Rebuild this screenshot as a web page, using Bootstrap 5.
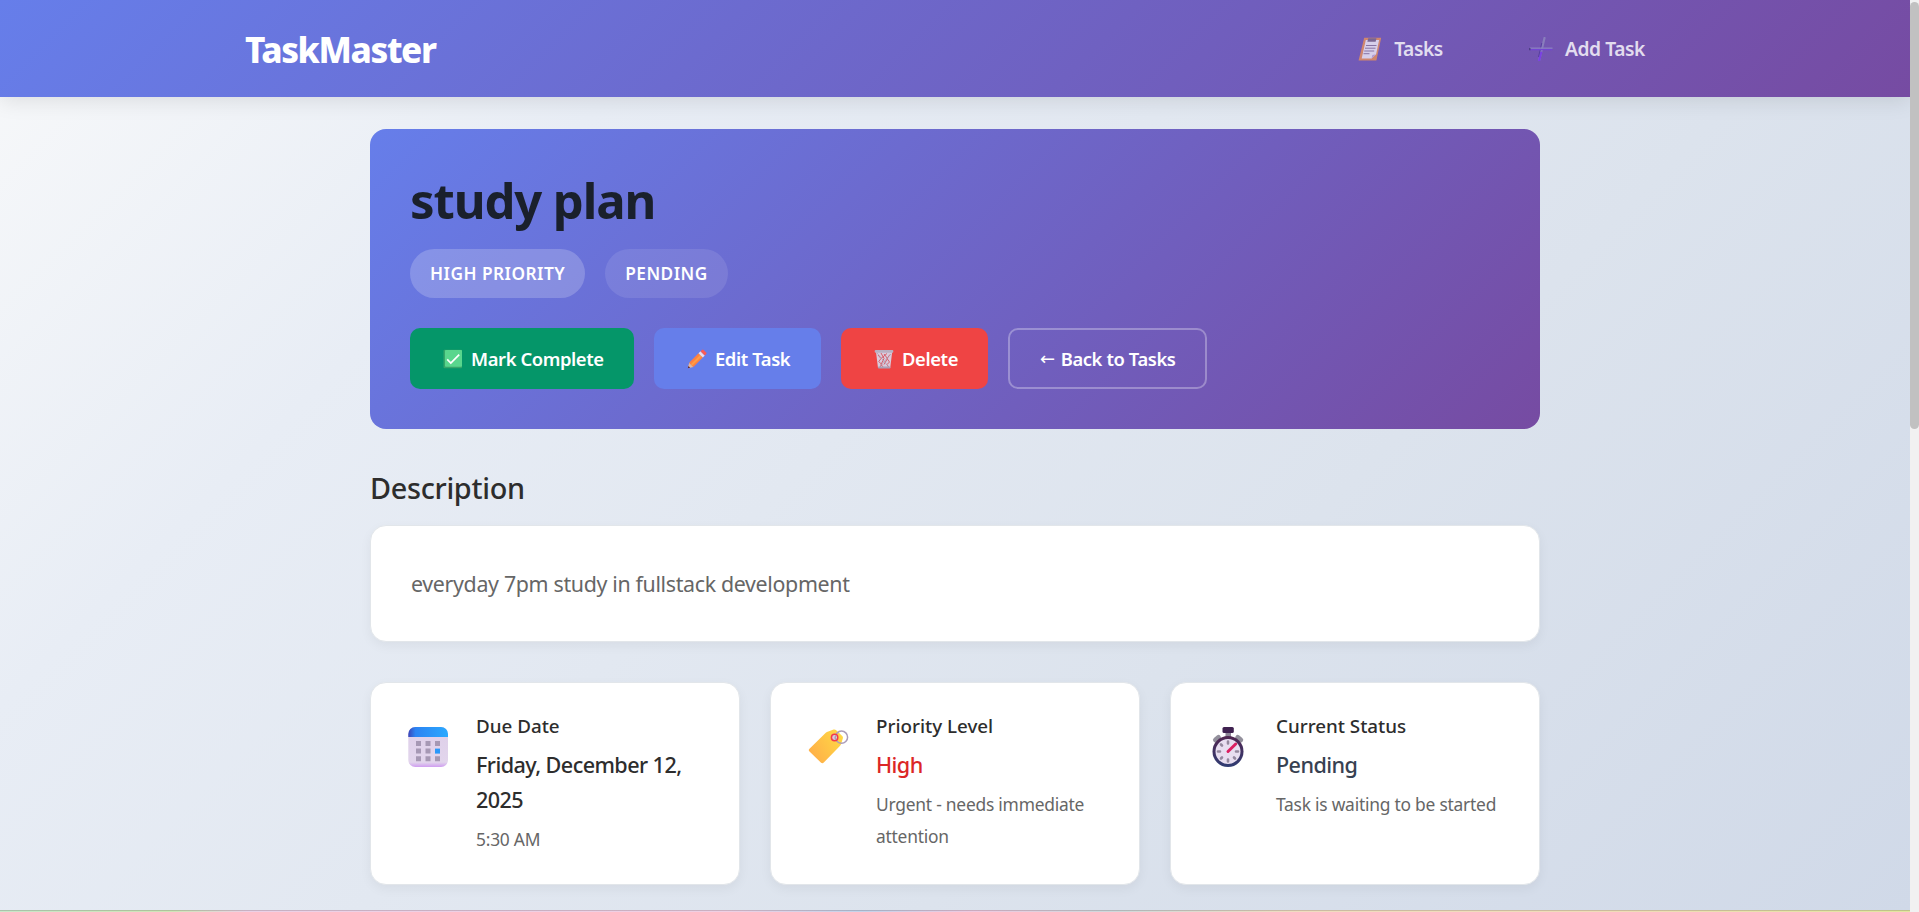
<!DOCTYPE html>
<html lang="en">
<head>
<meta charset="utf-8">
<meta name="viewport" content="width=device-width, initial-scale=1">
<title>TaskMaster</title>
<link href="https://cdn.jsdelivr.net/npm/bootstrap@5.3.0/dist/css/bootstrap.min.css" rel="stylesheet">
<style>
html,body{height:100%;overflow:hidden}
body{font-family:"Noto Sans","Open Sans",sans-serif;background:#f1f1f1;color:#2d2d2d}
.page{width:1910px;height:912px;background:linear-gradient(135deg,#f8f9fa 0%,#e8edf5 25%,#dce3ed 65%,#d0d9e8 100%)}
.topbar{height:97px;flex:none;background:linear-gradient(135deg,#667eea,#764ba2);box-shadow:0 4px 20px rgba(0,0,0,.1)}
.inner{width:1420px;padding-right:20px}
.brand{font-size:35px;font-weight:800;color:#fff;line-height:1;letter-spacing:-1.4px;padding-top:2px}
.menu-link{font-size:19.2px;font-weight:600;color:#fff;opacity:.8;line-height:1;letter-spacing:-.4px;gap:12px;text-decoration:none}
.menu-gap{gap:86px}
.wrap{width:1170px;padding-top:32px;flex:none}
.hero{height:300px;border-radius:16px;background:linear-gradient(135deg,#667eea,#764ba2);padding:40px}
.hero h1{font-size:49px;font-weight:700;color:#1a202c;line-height:62px;height:80px;margin:0;letter-spacing:-1.1px}
.pill{height:49px;padding:0 20px;border-radius:25px;background:rgba(255,255,255,.1);color:#fff;font-weight:600;font-size:17.3px;letter-spacing:.47px}
.pill.hi{background:rgba(255,255,255,.2)}
.gap-20{gap:20px}
.acts{margin-top:30px}
.act{height:61px;border-radius:10px;border:0;color:#fff;font-weight:600;font-size:18.4px;letter-spacing:-.4px;padding:0 0 0 33px;gap:8px}
.act-done{width:224px;background:#059669}
.act-edit{width:167px;background:#667eea}
.act-del{width:147px;background:#ef4444}
.act-back{width:199px;border:2px solid rgba(255,255,255,.3);padding-left:30px;gap:6px}
.arr{font-family:"DejaVu Sans",sans-serif;font-weight:400;font-size:18px}
.h-sec{font-size:28.8px;font-weight:500;line-height:36px;margin:41px 0 19px;letter-spacing:-.3px}
.panel{background:#fff;border:1px solid #e2e6ea;border-radius:16px;box-shadow:0 4px 12px rgba(0,0,0,.05)}
.desc{height:117px;padding:2px 0 0 40px;font-size:21.4px;color:#666;letter-spacing:-.34px}
.infos{display:grid;grid-template-columns:repeat(3,370px);gap:30px;margin-top:40px}
.info{height:203px;padding:28px 22px 0 36px}
.info svg{margin-top:15px;flex:none}
.info-text{margin-left:27px}
.lab{font-size:18.8px;font-weight:500;line-height:30px;letter-spacing:0;margin:0}
.val{font-size:21.6px;font-weight:500;line-height:35px;letter-spacing:-.57px;margin:6px 0}
.sub{font-size:17.4px;color:#666;line-height:32px;letter-spacing:-.23px;margin:0}
.high{color:#dc2626}
.pend{color:#374151}
.strip{height:2px;border-top:1px solid rgba(0,0,0,.15);background:linear-gradient(90deg,#c8e6c9 0,#cfe5b8 9%,#ecd0e6 13%,#efcfe3 38%,#c3d3ea 45%,#efc9e0 51%,#cfd8dc 58%,#f0dcc0 68%,#f0dcb8 85%,#e2e6a0 100%) border-box}
.scroll-track{width:9px;height:912px;padding-top:2px;background:#f1f1f1}
.scroll-thumb{height:427px;border-radius:5px;background:#c1c1c1}
</style>
</head>
<body class="d-flex">
<div class="page d-flex flex-column">
<header class="topbar">
  <div class="inner mx-auto d-flex align-items-center justify-content-between h-100">
    <span class="brand">TaskMaster</span>
    <nav class="d-flex menu-gap">
      <a class="menu-link d-flex align-items-center">
        <svg width="24" height="24" viewBox="0 0 24 24"><path d="M6.2.8h17L18.4 23.5H.6z" fill="#e8925c"/><path d="M7.8 3h13.3l-3 14.2-4.500 4.300H3.700z" fill="#f1edf8"/><path d="M18.200 17.200l-4.700 4.400.9-3.700z" fill="#c2a9d6"/><path d="M10.300 1.200h8.200l-.9 3.600H9.300z" fill="#7d6a8c"/><path d="M8 8.500h10.500M7 11.200h10.500M6.200 14h10M5.500 16.700h6" stroke="#8d7aa0" stroke-width="1"/></svg>
        <span>Tasks</span></a>
      <a class="menu-link d-flex align-items-center">
        <svg width="24" height="24" viewBox="0 0 24 24"><path d="M15.500 1L10.200 23.200" stroke="#8f88c0" stroke-width="2.200" stroke-linecap="round"/><path d="M12.200 15.500L10.200 23.200" stroke="#7c3cf0" stroke-width="2.200" stroke-linecap="round"/><path d="M12.800 6L9.500 20" stroke="#4f3a9c" stroke-width="1"/><path d="M1 11.200h22.500" stroke="#9089c6" stroke-width="1.400"/><path d="M1 12.600h22.300" stroke="#7440dc" stroke-width="1.300"/><path d="M.8 13.200v-2.200" stroke="#3f3570" stroke-width="1.300"/></svg>
        <span>Add Task</span></a>
    </nav>
  </div>
</header>
<main class="wrap mx-auto">
  <section class="hero">
    <h1>study plan</h1>
    <div class="d-flex gap-20">
      <div class="pill hi d-flex align-items-center">HIGH PRIORITY</div>
      <div class="pill d-flex align-items-center">PENDING</div>
    </div>
    <div class="acts d-flex gap-20">
      <button class="act act-done btn d-flex align-items-center">
        <svg width="20" height="20" viewBox="0 0 20 20"><rect x=".5" y=".8" width="18.500" height="18.500" rx="1" fill="#36a56a"/><rect x="2" y="1" width="17" height="16.800" rx=".8" fill="#59d68d"/><path d="M4.200 10.300l3.600 3.700 8.400-8.400" fill="none" stroke="#fff" stroke-width="1.700"/></svg>
        <span>Mark Complete</span></button>
      <button class="act act-edit btn d-flex align-items-center">
        <svg width="20" height="20" viewBox="0 0 20 20"><path d="M.8 19.300l1.400-5.600 4.200 4.200z" fill="#e8b79a"/><path d="M.8 19.300l.6-2.400 1.800 1.800z" fill="#5b2b3a"/><path d="M2.200 13.700L11.500 4.300l4.300 4.300-9.400 9.300z" fill="#ff8040"/><path d="M3.800 15.300l9.300-9.300 1.400 1.400-9.300 9.300z" fill="#ff9d45"/><path d="M11.500 4.300l2-2 4.300 4.300-2 2z" fill="#e4dcf0"/><path d="M13.500 2.300L15 .9q.8-.7 1.600 0l2.600 2.600q.7.8 0 1.600l-1.400 1.500z" fill="#fb5b55"/></svg>
        <span>Edit Task</span></button>
      <button class="act act-del btn d-flex align-items-center">
        <svg width="20" height="20" viewBox="0 0 20 20"><path d="M2 3h16.200l-2 16H4z" fill="#d9cbdc"/><path d="M4 6l3 3.500-2.200 3 3 3L6 18M7 4l3 5.500-3 6 2.500 3M10 5l3.500 4.500-3.500 6M16 5.500l-3 4 2.500 3.500-2.500 2.500 1.500 2.500M13 4.500L7 9.500" fill="none" stroke="#d8606c" stroke-width="1"/><path d="M3 4l11 13M17 5L6 17" stroke="#a99bb0" stroke-width=".7"/><rect x=".7" y="1" width="18.600" height="2.700" rx="1" fill="#b9b0c2"/><rect x="4" y="17.600" width="12.400" height="1.900" rx=".8" fill="#aaa0b5"/></svg>
        <span>Delete</span></button>
      <button class="act act-back btn d-flex align-items-center"><span class="arr">←</span><span>Back to Tasks</span></button>
    </div>
  </section>
  <h2 class="h-sec">Description</h2>
  <div class="panel desc d-flex align-items-center">everyday 7pm study in fullstack development</div>
  <div class="infos">
    <div class="panel info d-flex align-items-start">
      <svg width="42" height="42" viewBox="0 0 42 42"><defs><linearGradient id="ct" x1="0" x2="1"><stop offset="0" stop-color="#3b45b8"/><stop offset=".18" stop-color="#2c83f2"/><stop offset="1" stop-color="#2aa9ff"/></linearGradient><linearGradient id="cb" x1="0" y1="0" x2="0" y2="1"><stop offset="0" stop-color="#decfe9"/><stop offset=".88" stop-color="#e2d5ec"/><stop offset="1" stop-color="#cf9df0"/></linearGradient></defs><rect x="1.300" y="1" width="39.700" height="40" rx="7" fill="url(#cb)"/><path d="M1.300 11V8a7 7 0 0 1 7-7h25.700a7 7 0 0 1 7 7v3z" fill="url(#ct)"/><g fill="#a698b4"><path d="M9 15h5v5H9zM18.500 15h5v5h-5zM28 15h5v5h-5zM9 22.600h5v5H9zM18.500 22.600h5v5h-5zM9 30.300h5v5H9zM18.500 30.300h5v5h-5zM28 30.300h5v5h-5z"/></g><path d="M28 22.600h5v5h-5z" fill="#2b98fa"/></svg>
      <div class="info-text"><p class="lab">Due Date</p><p class="val">Friday, December 12, 2025</p><p class="sub">5:30 AM</p></div>
    </div>
    <div class="panel info d-flex align-items-start">
      <svg width="42" height="42" viewBox="0 0 42 42"><defs><linearGradient id="tg" x1="0" y1=".8" x2="1" y2=".2"><stop offset="0" stop-color="#ffad48"/><stop offset="1" stop-color="#ffd945"/></linearGradient></defs><path d="M2.500 22.700L18.800 6.800q1-1 2.500-1.400l5.300-1.800q1.500-.4 2.600.7l6 5.800q1.100 1 .6 2.500l-1.600 5.200q-.4 1.200-1.300 2.100L16.800 36.600q-1.500 1.500-3 0L2.500 25.500q-1.500-1.400 0-2.800z" fill="url(#tg)"/><circle cx="34.500" cy="11.200" r="6.100" fill="none" stroke="#ab9cb8" stroke-width="1.500"/><circle cx="27.600" cy="11.500" r="3.200" fill="#e0ccd8" stroke="#f23a4c" stroke-width="1.500"/><path d="M28.700 9.200q-1.200 2.300.2 4.500" fill="none" stroke="#ab9cb8" stroke-width="1.400"/></svg>
      <div class="info-text"><p class="lab">Priority Level</p><p class="val high">High</p><p class="sub">Urgent - needs immediate attention</p></div>
    </div>
    <div class="panel info d-flex align-items-start">
      <svg width="42" height="42" viewBox="0 0 42 42"><defs><linearGradient id="sw" x1="0" y1="0" x2="0" y2="1"><stop offset="0" stop-color="#512550"/><stop offset="1" stop-color="#303d73"/></linearGradient></defs><rect x="18.500" y="5" width="5.500" height="6" fill="#8c8496"/><rect x="15.500" y="1" width="11.300" height="6" rx="1.500" fill="#3f2150"/><path d="M8.500 14l3-2.500M33.700 14l-3-2.500" stroke="#93909c" stroke-width="5" stroke-linecap="round"/><circle cx="21" cy="25.500" r="15.500" fill="url(#sw)"/><circle cx="21" cy="25.500" r="12.500" fill="#e8def0"/><g stroke="#95899f" stroke-width="2.600" stroke-linecap="round"><path d="M21 15.500v2M21 33.500v2M11 25.500h2M29 25.500h2M14 18.500l1 1M28 32.500l-1-1M14 32.500l1-1"/></g><path d="M21 25.500l7.700-7.500" stroke="#dc1f61" stroke-width="3" stroke-linecap="round"/></svg>
      <div class="info-text"><p class="lab">Current Status</p><p class="val pend">Pending</p><p class="sub">Task is waiting to be started</p></div>
    </div>
  </div>
</main>
<div class="strip mt-auto"></div>
</div>
<div class="scroll-track"><div class="scroll-thumb"></div></div>
</body></html>
